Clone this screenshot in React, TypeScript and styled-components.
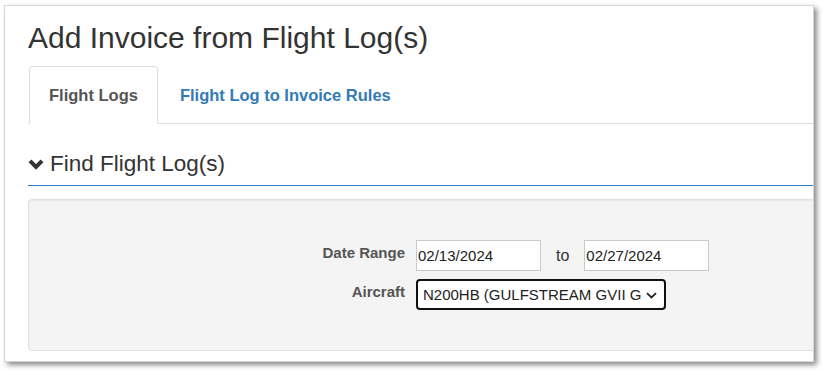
import React from 'react';
import styled, { createGlobalStyle } from 'styled-components';

const GlobalStyle = createGlobalStyle`
  html, body {
    margin: 0;
    padding: 0;
    background: #ffffff;
  }
  body {
    font-family: "Liberation Sans", Arial, Helvetica, sans-serif;
    color: #333333;
  }
  * {
    box-sizing: border-box;
  }
`;

const Page = styled.div`
  width: 823px;
  height: 372px;
  padding: 5px 0 0 4px;
  overflow: hidden;
`;

const Panel = styled.div`
  width: 810px;
  height: 357px;
  background: #ffffff;
  border: 1px solid #d6d6d6;
  box-shadow: 3px 3px 5px rgba(0, 0, 0, 0.45);
  padding: 15px 0 0 23px;
  overflow: hidden;
`;

const Title = styled.h1`
  margin: 0;
  font-size: 30px;
  line-height: 33px;
  font-weight: 400;
  color: #333333;
`;

const TabBar = styled.div`
  display: flex;
  margin-top: 12px;
  border-bottom: 1px solid #dddddd;
`;

const Tab = styled.a<{ $active?: boolean }>`
  display: flex;
  align-items: center;
  height: 58px;
  padding: 0 19px;
  margin: 0 2px -1px 0;
  border: 1px solid ${({ $active }) => ($active ? '#dddddd' : 'transparent')};
  border-bottom-color: ${({ $active }) => ($active ? '#ffffff' : 'transparent')};
  border-radius: 4px 4px 0 0;
  background: ${({ $active }) => ($active ? '#ffffff' : 'transparent')};
  font-size: 16.5px;
  font-weight: 700;
  color: ${({ $active }) => ($active ? '#555555' : '#337ab7')};
  text-decoration: none;
  cursor: pointer;

  &:first-child {
    margin-left: 1px;
  }
`;

const SectionHeading = styled.h3`
  display: flex;
  align-items: center;
  gap: 6px;
  margin: 27px 0 0;
  padding-bottom: 9px;
  border-bottom: 1px solid #2a7bc9;
  font-size: 22.5px;
  line-height: 25px;
  font-weight: 400;
  color: #333333;
`;

const Chevron = styled.svg`
  width: 16px;
  height: 12px;
  flex: none;
  margin-top: 1px;
`;

const Well = styled.div`
  margin: 13px -12px 0 0;
  height: 152px;
  background: #f4f4f4;
  border: 1px solid #e0e0e0;
  border-radius: 4px;
  box-shadow: inset 0 1px 1px rgba(0, 0, 0, 0.04);
  padding-top: 40px;
`;

const FormGrid = styled.div`
  display: grid;
  grid-template-columns: 376px 1fr;
  column-gap: 11px;
  row-gap: 8px;
  align-items: center;
`;

const Label = styled.label`
  text-align: right;
  font-size: 15px;
  font-weight: 700;
  color: #555555;
  padding-bottom: 6px;
`;

const Controls = styled.div`
  display: flex;
  align-items: center;
`;

const DateInput = styled.input`
  width: 125px;
  height: 31px;
  padding: 0 1px;
  border: 1px solid #c9c9c9;
  border-radius: 0;
  background: #ffffff;
  font-family: "Liberation Sans", Arial, sans-serif;
  font-size: 15px;
  color: #222222;
  outline: none;
`;

const ToText = styled.span`
  margin: 0 15px;
  font-size: 16px;
  color: #333333;
`;

const SelectBox = styled.div`
  display: flex;
  align-items: center;
  width: 250px;
  height: 31px;
  padding-left: 5px;
  border: 2px solid #111111;
  border-radius: 4px;
  background: #ffffff;
`;

const SelectText = styled.span`
  flex: 1;
  white-space: nowrap;
  font-size: 15px;
  color: #222222;
`;

const SelectArrow = styled.svg`
  width: 11px;
  height: 7px;
  flex: none;
  margin: 1px 7px 0 4px;
`;

export default function App() {
  return (
    <>
      <GlobalStyle />
      <Page>
        <Panel>
          <Title>Add Invoice from Flight Log(s)</Title>
          <TabBar>
            <Tab $active>Flight Logs</Tab>
            <Tab>Flight Log to Invoice Rules</Tab>
          </TabBar>

          <SectionHeading>
            <Chevron viewBox="0 0 16 12">
              <path d="M2 2.8 L8 8.8 L14 2.8" fill="none" stroke="#333" strokeWidth="4" strokeLinecap="butt" strokeLinejoin="miter" />
            </Chevron>
            Find Flight Log(s)
          </SectionHeading>

          <Well>
            <FormGrid>
              <Label>Date Range</Label>
              <Controls>
                <DateInput type="text" defaultValue="02/13/2024" />
                <ToText>to</ToText>
                <DateInput type="text" defaultValue="02/27/2024" />
              </Controls>

              <Label>Aircraft</Label>
              <Controls>
                <SelectBox>
                  <SelectText>N200HB (GULFSTREAM GVII G</SelectText>
                  <SelectArrow viewBox="0 0 11 7">
                    <path d="M1 1.2 L5.5 5.5 L10 1.2" fill="none" stroke="#222" strokeWidth="1.8" />
                  </SelectArrow>
                </SelectBox>
              </Controls>
            </FormGrid>
          </Well>
        </Panel>
      </Page>
    </>
  );
}
